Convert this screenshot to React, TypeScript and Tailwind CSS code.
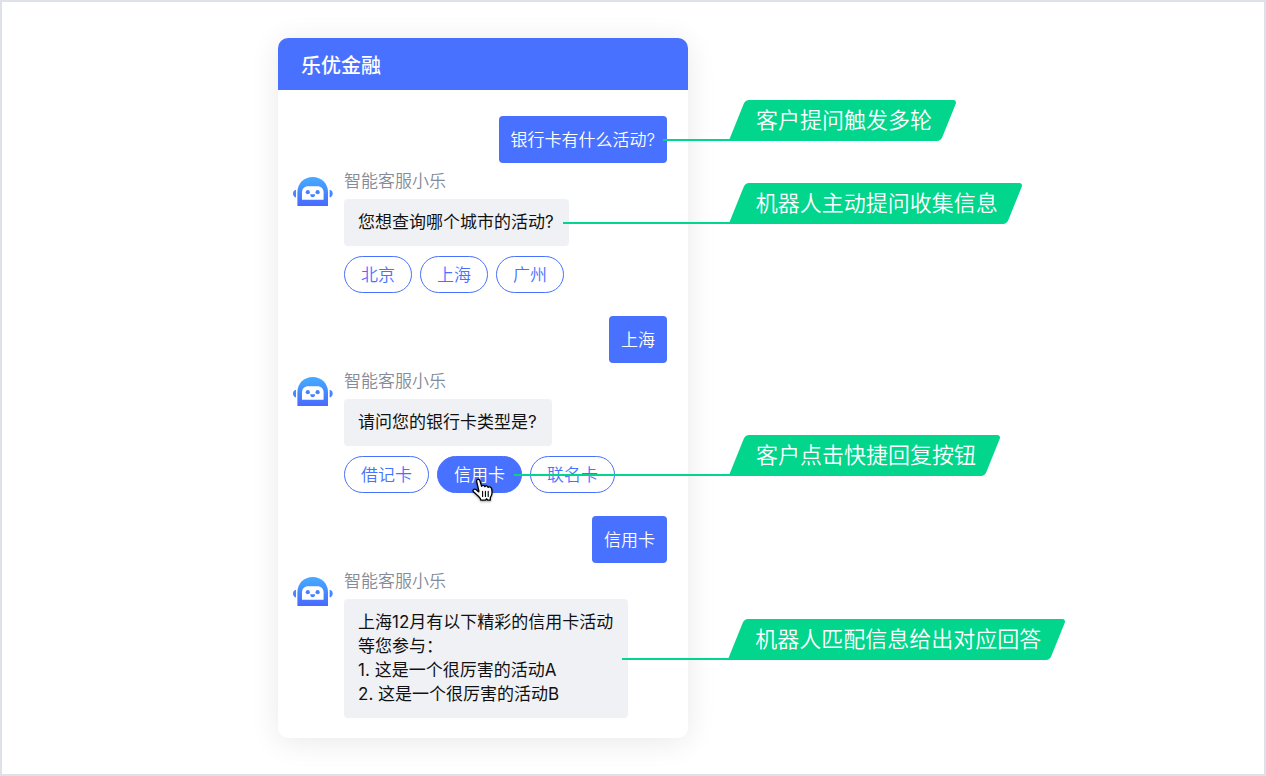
import { useId } from 'react';
import type { ReactNode } from 'react';
import clsx from 'clsx';

const cities = ['北京', '上海', '广州'];
const cardTypes = ['借记卡', '信用卡', '联名卡'];

export default function App() {
  return (
    <main className="grid min-h-screen grid-cols-[7fr_25fr] overflow-hidden border-2 border-[#dfe1ea] bg-white py-9 font-['Inter','Noto_Sans_CJK_SC',sans-serif] text-[17px] leading-6">
      <section className="col-start-2 w-full max-w-[410px] self-start rounded-[10px] bg-white shadow-[0_4px_30px_rgba(0,0,0,0.09)]">
        <header className="rounded-t-[10px] bg-[#4971ff] px-[23px] pt-3.5 pb-2.5">
          <h1 className="text-[20px] leading-7 font-medium text-white">乐优金融</h1>
        </header>

        <div className="flex flex-col pt-[26px] pr-[21px] pb-5 pl-[15px]">
          <UserMessage text="银行卡有什么活动?">
            <Callout text="客户提问触发多轮" lineClass="w-[67px]" offsetClass="-ml-1" />
          </UserMessage>

          <BotMessage
            text="您想查询哪个城市的活动?"
            callout={<Callout text="机器人主动提问收集信息" lineClass="w-[167px]" offsetClass="-ml-1.5" />}
          >
            {cities.map((city) => (
              <QuickReply key={city} label={city} />
            ))}
          </BotMessage>

          <UserMessage text="上海" />

          <BotMessage text="请问您的银行卡类型是?">
            {cardTypes.map((type) =>
              type === '信用卡' ? (
                <div key={type} className="relative">
                  <QuickReply label={type} active />
                  <HandCursor />
                  <Callout text="客户点击快捷回复按钮" lineClass="w-[216px]" offsetClass="-ml-2" />
                </div>
              ) : (
                <QuickReply key={type} label={type} />
              )
            )}
          </BotMessage>

          <UserMessage text="信用卡" />

          <BotMessage
            text={
              <>
                <p>上海12月有以下精彩的信用卡活动</p>
                <p>等您参与：</p>
                <p>1. 这是一个很厉害的活动A</p>
                <p>2. 这是一个很厉害的活动B</p>
              </>
            }
            callout={<Callout text="机器人匹配信息给出对应回答" lineClass="w-[107px]" offsetClass="-ml-1.5" />}
          />
        </div>
      </section>
    </main>
  );
}

function UserMessage({ text, children }: { text: string; children?: ReactNode }) {
  return (
    <div className="relative self-end rounded bg-[#4971ff] px-3 py-[11px] pt-3 font-[350] text-white">
      {text}
      {children}
    </div>
  );
}

function BotMessage({ text, callout, children }: { text: ReactNode; callout?: ReactNode; children?: ReactNode }) {
  return (
    <article className={clsx('flex gap-[11px] pt-1.5', children && 'pb-[23px]')}>
      <RobotAvatar />
      <div className="flex flex-col items-start">
        <h2 className="mb-1.5 font-[350] text-[#858b98]">智能客服小乐</h2>
        <div className="relative rounded bg-[#f0f1f5] pt-[11px] pr-[15px] pb-3 pl-3.5 whitespace-nowrap text-[#111]">
          {text}
          {callout}
        </div>
        {children && <div className="mt-2.5 flex gap-2">{children}</div>}
      </div>
    </article>
  );
}

function QuickReply({ label, active = false }: { label: string; active?: boolean }) {
  return (
    <button
      type="button"
      className={clsx(
        'h-[37px] rounded-full border border-[#4971ff] px-4 font-[350] whitespace-nowrap',
        active ? 'bg-[#4971ff] text-white' : 'bg-white text-[#4971ff]'
      )}
    >
      {label}
    </button>
  );
}

function Callout({ text, lineClass, offsetClass }: { text: string; lineClass: string; offsetClass: string }) {
  return (
    <div className={clsx('absolute bottom-1/2 left-full -mb-px flex items-end', offsetClass)}>
      <span className={clsx('h-0.5 shrink-0 bg-[#02d58c]', lineClass)} />
      <span className="relative py-1.5 pr-6 pl-[26px] text-[22px] leading-[29px] font-[350] whitespace-nowrap text-white">
        <span className="absolute inset-x-[7px] inset-y-0 -skew-x-[22deg] rounded rounded-bl-none bg-[#02d58c]" />
        <span className="relative">{text}</span>
      </span>
    </div>
  );
}

function RobotAvatar() {
  const gradient = useId();
  return (
    <svg viewBox="0 0 40 29" className="mt-2 h-[29px] w-10 shrink-0" aria-hidden="true">
      <defs>
        <linearGradient id={gradient} gradientUnits="userSpaceOnUse" x1="20" y1="0" x2="20" y2="29">
          <stop offset="0" stopColor="#44adff" />
          <stop offset="1" stopColor="#4969ff" />
        </linearGradient>
      </defs>
      <g fill={`url(#${gradient})`}>
        <path d="M4.4 29V15.2C4.4 6.6 11 0 19.7 0S35 6.6 35 15.2V29Z" />
        <path d="M3 12.7C1.2 13 0 14.4 0 16.5s1.2 3.6 3 3.9Z" />
        <path d="M36.6 12.7c1.9.3 3.1 1.7 3.1 3.8s-1.2 3.6-3.1 3.9Z" />
      </g>
      <path d="M9 22.7V15.5C9 11.5 11.4 9.2 15.2 9.2h9.2c3.8 0 6.2 2.3 6.2 6.3v7.2Z" fill="#fff" />
      <g fill="#4982ff">
        <circle cx="14.8" cy="15.2" r="2.1" />
        <circle cx="24.6" cy="15.2" r="2.1" />
        <path d="M17.2 17.2h4.9c0 2-1 3-2.4 3s-2.5-1-2.5-3Z" />
      </g>
    </svg>
  );
}

function HandCursor() {
  return (
    <svg viewBox="0 0 22 24" className="absolute top-[22px] left-[35px] h-6 w-[22px] drop-shadow-[0_1px_1px_rgba(0,0,0,0.35)]" aria-hidden="true">
      <path
        d="M6.8 12.6 4.7 3.6C4.2 1.1 7.2.3 7.9 2.7l1.7 5.7c.5-1.5 2.7-1.4 3.2.3.6-1.3 2.9-1 3.3.7.8-1 3-.6 3.4 1.1.6 2.3.8 4.6 0 6.7-.5 1.2-1.2 1.7-1.2 3.1v1.9h-2.7l-.9-1.4-1.3 1.4H8.9c-.3-1.8-1.6-2.9-2.8-4.2L1.5 13.8C.2 12 2.2 10.3 3.9 11.5l2.9 2.4Z"
        fill="#fff"
        stroke="#000"
        strokeWidth="1.3"
        strokeLinejoin="round"
      />
      <path d="M10.6 13.4v5M13.4 13.4v5M16.2 13.4v5" stroke="#000" strokeWidth="1.1" strokeLinecap="round" />
    </svg>
  );
}
